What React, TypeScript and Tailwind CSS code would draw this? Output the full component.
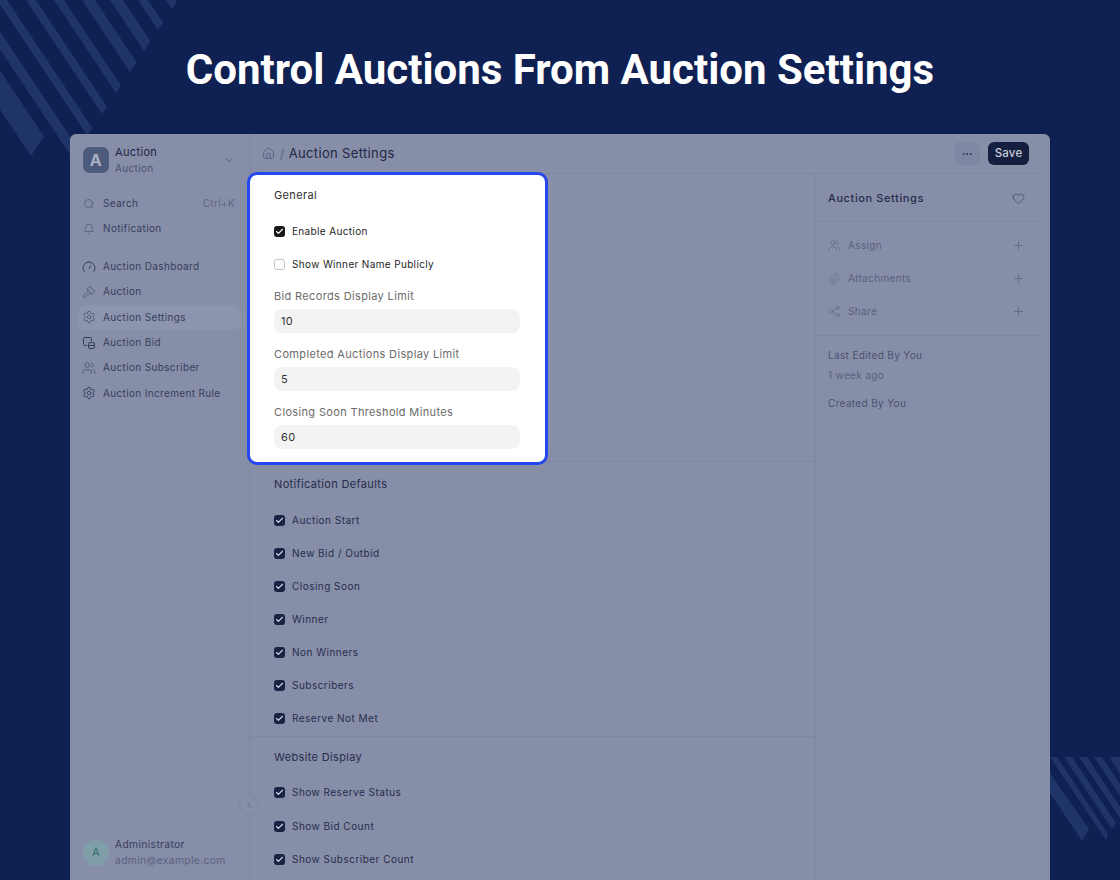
import React from 'react';
import {
  Bell,
  Check,
  ChevronDown,
  ChevronLeft,
  Ellipsis,
  Gavel,
  Heart,
  Home,
  Paperclip,
  Plus,
  Search,
  Settings,
  Share2,
  Users
} from 'lucide-react';

const STRIPE = '#1f3469';

// top-left stripes: [x at y=0, width at y=0, end line constant]
const TOP_STRIPES: [number, number, number][] = [
  [166, 10, 178],
  [138, 10, 178],
  [110, 13, 178],
  [82, 13, 178],
  [54, 10, 178],
  [26, 10, 178],
  [-3, 10, 178],
  [-33, 12, 178],
  [-73, 26, 135]
];

const stripePoints = ([a, w, c]: [number, number, number]) => {
  const y1 = (c - a) * 0.75;
  const y2 = (c - a - w) * 0.75;
  return `${a},0 ${a + w},0 ${a + w + (y2 * 2) / 3},${y2} ${a + (y1 * 2) / 3},${y1}`;
};

const DashboardIcon = () => (
  <svg width="14" height="14" viewBox="0 0 14 14" fill="none" stroke="currentColor" strokeWidth="1" strokeLinecap="round">
    <path d="M2 11.5a6 6 0 1 1 10 0" />
    <path d="M7 8.5 9 5.5" />
  </svg>
);

const BidIcon = () => (
  <svg width="14" height="14" viewBox="0 0 14 14" fill="none" stroke="currentColor" strokeWidth="1" strokeLinejoin="round">
    <path d="M5 9.5H2.5a1 1 0 0 1-1-1v-6a1 1 0 0 1 1-1h6a1 1 0 0 1 1 1V5" />
    <rect x="6.5" y="6.5" width="6" height="6" rx="1.5" />
    <path d="M6.5 9.5h6" />
  </svg>
);

const RuleIcon = () => <Settings size={14} strokeWidth={1.6} />;

const NAV_ITEMS = [
  { label: 'Auction Dashboard', icon: <DashboardIcon /> },
  { label: 'Auction', icon: <Gavel size={14} strokeWidth={1} /> },
  { label: 'Auction Settings', icon: <Settings size={14} strokeWidth={1} />, active: true },
  { label: 'Auction Bid', icon: <BidIcon /> },
  { label: 'Auction Subscriber', icon: <Users size={14} strokeWidth={1} /> },
  { label: 'Auction Increment Rule', icon: <RuleIcon /> }
];

const SIDE_ACTIONS = [
  { label: 'Assign', icon: <Users size={13} strokeWidth={1} /> },
  { label: 'Attachments', icon: <Paperclip size={13} strokeWidth={1} /> },
  { label: 'Share', icon: <Share2 size={13} strokeWidth={1} /> }
];

const NOTIFICATION_ITEMS = ['Auction Start', 'New Bid / Outbid', 'Closing Soon', 'Winner', 'Non Winners', 'Subscribers', 'Reserve Not Met'];
const WEBSITE_ITEMS = ['Show Reserve Status', 'Show Bid Count', 'Show Subscriber Count'];

const DimCheck: React.FC<{ label: string; rowClass: string }> = ({ label, rowClass }) => (
  <div className={`flex items-center gap-[7px] text-[10px] tracking-[0.48px] text-[#262d4c] ${rowClass}`}>
    <span className="flex h-[11px] w-[11px] items-center justify-center rounded-[3px] bg-[#1a2344] text-[#d5d9e5]">
      <Check size={9} strokeWidth={3} />
    </span>
    <span>{label}</span>
  </div>
);

const Field: React.FC<{ label: string; value: string }> = ({ label, value }) => (
  <div className="flex flex-col">
    <div className="flex h-[18px] items-center text-[#6b6b6b]">{label}</div>
    <div className="mt-[4px] flex h-[24px] items-center rounded-lg bg-[#f3f3f3] px-[7px] text-[11px] text-[#333333]">{value}</div>
  </div>
);

export default function App() {
  return (
    <div className="relative flex h-[880px] w-[1120px] flex-col overflow-hidden bg-[#0f2052] font-['Inter',sans-serif] text-[11px] tracking-[0.35px]">
      <svg className="absolute left-0 top-0" width="200" height="170">
        {TOP_STRIPES.map(s => (
          <polygon key={s[0]} points={stripePoints(s)} fill={STRIPE} />
        ))}
      </svg>
      <svg className="absolute bottom-0 right-0" width="120" height="123" viewBox="1000 757 120 123">
        <polygon points="1050,773 1050,793 1082,841 1089,829" fill={STRIPE} />
        <polygon points="1050,757 1057,757 1108,834 1106,840" fill={STRIPE} />
        <polygon points="1064,757 1072,757 1116,823 1112,829" fill={STRIPE} />
        <polygon points="1079,757 1087,757 1120,807 1120,818" fill={STRIPE} />
        <polygon points="1094,757 1102,757 1120,784 1120,796" fill={STRIPE} />
        <polygon points="1109,757 1120,757 1120,774" fill={STRIPE} />
      </svg>

      <h1 className="relative flex h-[134px] shrink-0 items-center justify-center pt-[5px] font-['Roboto',sans-serif] text-[42px] font-bold tracking-normal text-white">
        Control Auctions From Auction Settings
      </h1>

      <div className="relative mx-[70px] flex min-h-0 flex-1 rounded-t-[6px] bg-[#878ea8]">
        {/* sidebar */}
        <aside className="flex w-[180px] shrink-0 flex-col border-r border-[#7f87a2] px-[8px] text-[10px]">
          <div className="mt-[10px] flex items-center pl-[5px] pr-[6px]">
            <div className="flex h-[26px] w-[26px] items-center justify-center rounded-[7px] bg-[#4d5a7c] text-[16px] font-bold text-[#a9b0c6]">A</div>
            <div className="ml-[6px] flex-1 pt-[1px] leading-[15.5px]">
              <div className="text-[11px] text-[#1f2644]">Auction</div>
              <div className="text-[#4b5270]">Auction</div>
            </div>
            <ChevronDown size={12} strokeWidth={1} className="text-[#1f2644]" />
          </div>

          <div className="mt-[15px] flex h-[25px] items-center pl-[5px] pr-[6px] text-[#373e5c]">
            <Search size={12} strokeWidth={1} />
            <span className="ml-[8px] flex-1">Search</span>
            <span className="text-[#5f6683]">Ctrl+K</span>
          </div>
          <div className="flex h-[25px] items-center pl-[5px] text-[#373e5c]">
            <Bell size={12} strokeWidth={1} />
            <span className="ml-[8px]">Notification</span>
          </div>

          <nav className="mt-[13px] flex flex-col">
            {NAV_ITEMS.map(item => (
              <div
                key={item.label}
                className={`flex h-[25.3px] items-center rounded-lg pl-[4px] text-[#373e5c] ${item.active ? 'bg-[#8d94ae]' : ''}`}
              >
                {item.icon}
                <span className="ml-[7px]">{item.label}</span>
              </div>
            ))}
          </nav>

          <div className="mt-auto mb-[12px] flex items-center pl-[5px]">
            <div className="flex h-[26px] w-[26px] items-center justify-center rounded-full bg-[#7f9ea9] text-[11px] text-[#2f6b6b]">A</div>
            <div className="ml-[6px] text-[10.3px] leading-[15.5px]">
              <div className="text-[#373e5c]">Administrator</div>
              <div className="text-[#5a617e]">admin@example.com</div>
            </div>
          </div>
        </aside>

        {/* collapse button */}
        <div className="absolute left-[169px] top-[661px] z-10 flex h-[20px] w-[20px] items-center justify-center rounded-full border border-[#7f87a2] bg-[#878ea8] text-[#4b5270]">
          <ChevronLeft size={10} strokeWidth={1.2} />
        </div>

        <div className="mr-[8px] flex min-w-0 flex-1 flex-col">
          <header className="flex h-[40px] shrink-0 items-center border-b border-[#7f87a2] pl-[12px]">
            <Home size={13} strokeWidth={1} className="text-[#3c4362]" />
            <span className="ml-[5px] text-[12px] text-[#5a617e]">/</span>
            <span className="ml-[4px] text-[13px] text-[#1f2644]">Auction Settings</span>
            <div className="ml-auto mr-[13px] flex items-center gap-[8px]">
              <div className="flex h-[23px] w-[26px] items-center justify-center rounded-md bg-[#7f87a2] text-[#1f2644]">
                <Ellipsis size={12} strokeWidth={1.5} />
              </div>
              <div className="flex h-[23px] w-[41px] items-center justify-center rounded-md bg-[#151f3f] text-[11.5px] font-medium tracking-[0.2px] text-[#c9cedd]">
                Save
              </div>
            </div>
          </header>

          <div className="flex min-h-0 flex-1">
            <main className="w-[565px] shrink-0">
              <section className="flex h-[288px] flex-col border-b border-[#7f87a2]">
                <div className="relative z-10 -ml-[3px] -mt-[2px] flex h-[293px] w-[301px] shrink-0 flex-col rounded-[10px] border-[3px] border-[#2547f0] bg-white pl-[24px] pr-[25px] text-[#262626]">
                  <div className="mt-[12px] flex h-[16px] items-center text-[#303030]">General</div>
                  <div className="mt-[20px] flex h-[16px] items-center gap-[7px] text-[10px]">
                    <span className="flex h-[11px] w-[11px] items-center justify-center rounded-[3px] bg-[#171717] text-white">
                      <Check size={9} strokeWidth={3} />
                    </span>
                    Enable Auction
                  </div>
                  <div className="mt-[17px] flex h-[16px] items-center gap-[7px] text-[10px]">
                    <span className="h-[11px] w-[11px] rounded-[3px] border border-[#c4c4c4] bg-white" />
                    Show Winner Name Publicly
                  </div>
                  <div className="mt-[15px] flex flex-col gap-[12px]">
                    <Field label="Bid Records Display Limit" value="10" />
                    <Field label="Completed Auctions Display Limit" value="5" />
                    <Field label="Closing Soon Threshold Minutes" value="60" />
                  </div>
                </div>
              </section>

              <section className="h-[275px] border-b border-[#7f87a2] pl-[24px] pt-[14px]">
                <div className="flex h-[16px] items-center text-[#262d4c]">Notification Defaults</div>
                <div className="mt-[11.5px] flex flex-col">
                  {NOTIFICATION_ITEMS.map(item => (
                    <DimCheck key={item} label={item} rowClass="h-[33px]" />
                  ))}
                </div>
              </section>

              <section className="pl-[24px] pt-[12px]">
                <div className="flex h-[16px] items-center text-[#262d4c]">Website Display</div>
                <div className="mt-[11px] flex flex-col">
                  {WEBSITE_ITEMS.map(item => (
                    <DimCheck key={item} label={item} rowClass="h-[33.4px]" />
                  ))}
                </div>
              </section>
            </main>

            <aside className="flex-1 border-l border-[#7f87a2]">
              <div className="flex h-[48px] items-center justify-between border-b border-[#7f87a2] pl-[12px] pr-[17px] pt-[1px] font-medium tracking-[0.6px] text-[#262d4c]">
                Auction Settings
                <Heart size={13} strokeWidth={1} className="text-[#262d4c]" />
              </div>
              <div className="flex h-[114px] flex-col justify-center border-b border-[#7f87a2] pl-[12px] pr-[17px] text-[10px]">
                {SIDE_ACTIONS.map(action => (
                  <div key={action.label} className="flex h-[33.4px] items-center text-[#5a617e]">
                    {action.icon}
                    <span className="ml-[7px] flex-1">{action.label}</span>
                    <Plus size={13} strokeWidth={1} className="text-[#4b5270]" />
                  </div>
                ))}
              </div>
              <div className="pl-[12px] pt-[10px] text-[10px] text-[#4b5270]">
                <div className="flex h-[18px] items-center">Last Edited By You</div>
                <div className="mt-[2px] flex h-[18px] items-center text-[#5a617e]">1 week ago</div>
                <div className="mt-[10px] flex h-[18px] items-center">Created By You</div>
              </div>
            </aside>
          </div>
        </div>
      </div>
    </div>
  );
}
